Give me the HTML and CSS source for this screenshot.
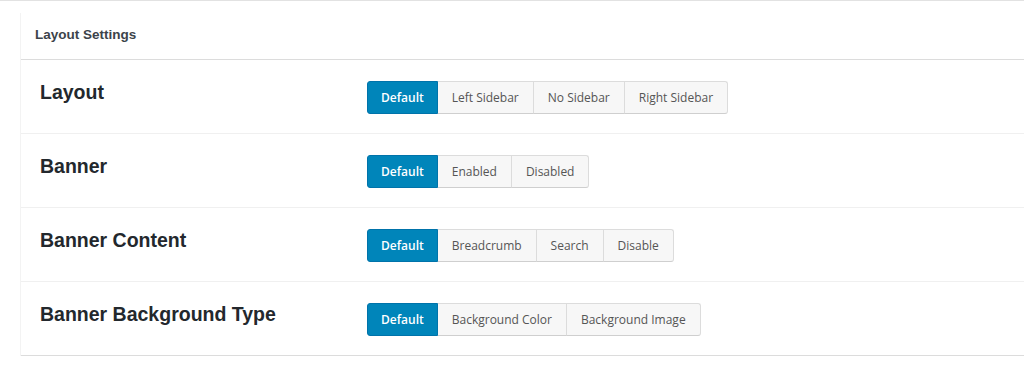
FILE: index.html
```html
<!DOCTYPE html>
<html lang="en">
<head>
    <meta charset="UTF-8">
    <meta name="viewport" content="width=device-width, initial-scale=1.0">
    <title>Layout Settings</title>
    <link rel="stylesheet" href="styles.css">
</head>
<body>

<div class="page">
    <div class="panel">
        <div class="panel-header">Layout Settings</div>

        <div class="row">
            <div class="row-label">Layout</div>
            <div class="btn-group">
                <span class="btn active">Default</span>
                <span class="btn">Left Sidebar</span>
                <span class="btn">No Sidebar</span>
                <span class="btn">Right Sidebar</span>
            </div>
        </div>

        <div class="row">
            <div class="row-label">Banner</div>
            <div class="btn-group">
                <span class="btn active">Default</span>
                <span class="btn">Enabled</span>
                <span class="btn">Disabled</span>
            </div>
        </div>

        <div class="row">
            <div class="row-label">Banner Content</div>
            <div class="btn-group">
                <span class="btn active">Default</span>
                <span class="btn">Breadcrumb</span>
                <span class="btn">Search</span>
                <span class="btn">Disable</span>
            </div>
        </div>

        <div class="row last">
            <div class="row-label">Banner Background Type</div>
            <div class="btn-group">
                <span class="btn active">Default</span>
                <span class="btn">Background Color</span>
                <span class="btn">Background Image</span>
            </div>
        </div>
    </div>
</div>

</body>
</html>
```

FILE: styles.css
```css
* {
    margin: 0;
    padding: 0;
    box-sizing: border-box;
}

body {
    background-color: #fff;
    font-family: 'Liberation Sans', Arial, sans-serif;
    color: #23282d;
}

.page {
    border-top: 1px solid #e2e2e2;
    padding: 12px 0 0 20px;
}

.panel {
    border-left: 1px solid #f3f3f3;
}

.panel-header {
    height: 47px;
    padding: 14px 0 0 14px;
    font-size: 13.5px;
    font-weight: bold;
    color: #3c434a;
    border-bottom: 1px solid #dcdcdc;
}

.row {
    display: grid;
    grid-template-columns: 327px 1fr;
    align-items: start;
    height: 74px;
    padding: 21px 0 0 19px;
    border-bottom: 1px solid #f0f0f0;
}

.row.last {
    border-bottom: 1px solid #dcdcdc;
}

.row-label {
    font-size: 19.5px;
    font-weight: bold;
    line-height: 22px;
    color: #23282d;
}

.btn-group {
    display: flex;
}

.btn {
    height: 33px;
    line-height: 31px;
    padding: 0 14px;
    font-family: 'Open Sans', sans-serif;
    font-size: 12px;
    color: #555;
    background-color: #f7f7f7;
    border: 1px solid #dcdcdc;
    border-bottom-color: #cfcfcf;
    border-left: none;
}

.btn:first-child {
    border-left: 1px solid #dcdcdc;
    border-radius: 3px 0 0 3px;
}

.btn:last-child {
    border-radius: 0 3px 3px 0;
}

.btn.active {
    padding: 0 13px;
    background-color: #0085ba;
    border-color: #0073aa;
    color: #fff;
    font-weight: 600;
}
```
